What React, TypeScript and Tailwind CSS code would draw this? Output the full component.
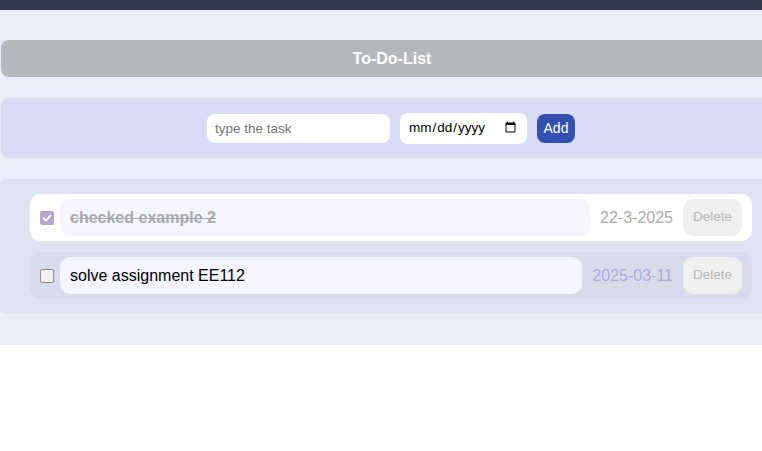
import React from "react";

function Check({ checked }: { checked: boolean }) {
  if (checked) {
    return (
      <div className="w-[14px] h-[14px] shrink-0 rounded-[2px] bg-[#b3a7d2] flex items-center justify-center">
        <svg width="10" height="10" viewBox="0 0 10 10" fill="none">
          <path d="M1.5 5.2 L4 7.6 L8.6 2.4" stroke="white" strokeWidth="1.8" strokeLinecap="round" strokeLinejoin="round" />
        </svg>
      </div>
    );
  }
  return <div className="w-[14px] h-[14px] shrink-0 rounded-[2px] border border-[#8e8e93] bg-[#f1f1f5]" />;
}

function Row({
  text,
  date,
  checked,
}: {
  text: string;
  date: string;
  checked: boolean;
}) {
  return (
    <div
      className={`h-[47px] rounded-[10px] flex items-center pl-[10px] pr-[10px] ${
        checked ? "bg-white" : "bg-[#d8dcea]"
      }`}
    >
      <Check checked={checked} />
      <div className="ml-[6px] flex-1 h-[37px] rounded-[10px] bg-[#f4f5fe] flex items-center pl-[10px]">
        <span
          className={
            checked
              ? "text-[16px] font-bold text-[#aaaaaa] line-through"
              : "text-[16px] text-black"
          }
        >
          {text}
        </span>
      </div>
      <span className={`ml-[10px] text-[16px] ${checked ? "text-[#aaaaaa]" : "text-[#a6aedc]"}`}>{date}</span>
      <button className="ml-[10px] w-[59px] h-[37px] rounded-[10px] bg-[#efefef] text-[13.5px] text-[#b8b8b8]">
        Delete
      </button>
    </div>
  );
}

export default function App() {
  return (
    <div className="w-full overflow-hidden bg-white h-[451px]" style={{ fontFamily: '"Liberation Sans", Arial, sans-serif' }}>
      <div className="h-[10px] bg-[#333c4e]" />
      <div className="bg-[#e8eef9] pt-[30px] pb-[31px]">
        <div className="ml-[1px] w-[782px] h-[37px] rounded-lg bg-[#b5b8bc] flex items-center justify-center">
          <span className="text-white font-bold text-[16px]">To-Do-List</span>
        </div>
        <div className="mt-[21px] ml-[1px] w-[790px] h-[60px] rounded-lg bg-[#d8ddf3] flex items-center pl-[206px] gap-[10px]">
          <input
            type="text"
            placeholder="type the task"
            className="w-[183px] h-[29px] rounded-lg bg-white px-[8px] text-[13.5px] outline-none placeholder:text-[#757575]"
          />
          <input
            type="date"
            className="w-[127px] h-[31px] rounded-lg bg-white px-[8px] text-[13.5px] text-black outline-none"
          />
          <button className="w-[38px] h-[29px] rounded-lg bg-[#3451b2] text-white text-[14px]">Add</button>
        </div>
        <div className="mt-[21px] w-[782px] rounded-md bg-[#dfe2f0] px-[30px] py-[15px] flex flex-col gap-[11px]">
          <Row text="checked example 2" date="22-3-2025" checked={true} />
          <Row text="solve assignment EE112" date="2025-03-11" checked={false} />
        </div>
      </div>
    </div>
  );
}
